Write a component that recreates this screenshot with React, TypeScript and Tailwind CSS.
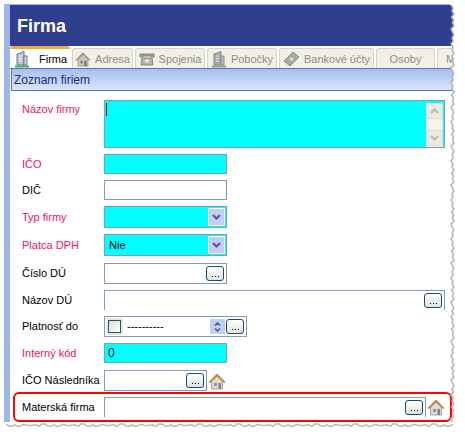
import type { FC, ReactNode } from 'react';

const FONT = "font-['Liberation_Sans',sans-serif]";

// torn screenshot edge, right side and bottom
const jag = (i: number) => [0, 2, 1, 3, 0.5, 2.5, 1.5, 3, 0, 1.5, 2.8, 1, 2.2][i % 13];
const rightEdge = Array.from({ length: 140 }, (_, i) => `${451 + jag(i)},${5 + i * 3}`).join(' ');
const bottomEdge = Array.from({ length: 150 }, (_, i) => `${6 + i * 3},${424 + jag(i * 5) * 0.8}`).join(' ');

const TornEdges: FC = () => (
  <svg className="absolute left-0 top-0 pointer-events-none" width="465" height="436" viewBox="0 0 465 436">
    <polygon points={`450,5 ${rightEdge} 465,425 465,0 450,0`} fill="#fff" />
    <polyline points={rightEdge} fill="none" stroke="#b4b4b4" strokeWidth="1.5" />
    <polyline points={bottomEdge} fill="none" stroke="#b8b8b8" strokeWidth="1.5" />
  </svg>
);

const BuildingIcon: FC<{ muted?: boolean }> = ({ muted }) => (
  <svg width="16" height="18" viewBox="0 0 16 18">
    <path d="M3 4l7-2.500V15H3z" fill={muted ? '#aaa' : '#b9c4d8'} stroke={muted ? '#8a8a8a' : '#6b7890'} />
    <path d="M10 6h3v9h-3z" fill={muted ? '#bbb' : '#d5dbe6'} stroke={muted ? '#8a8a8a' : '#6b7890'} />
    <path d="M5 6h3M5 8.500h3M5 11h3" stroke={muted ? '#e2e2e2' : '#eef3fb'} strokeWidth="1.2" />
    <path d="M1 16.500h14" stroke={muted ? '#999' : '#4aa83e'} strokeWidth="2" />
  </svg>
);

const HouseIcon: FC<{ muted?: boolean; size?: number }> = ({ muted, size = 16 }) => (
  <svg width={size} height={size} viewBox="0 0 18 18">
    <path d="M3.500 9v8h11V9L9 4z" fill={muted ? '#c9c9c2' : '#dcdcd8'} stroke={muted ? '#999' : '#a5a5a0'} />
    <path d="M0.500 10 9 1.500l8.500 8.500-1.500 1L9 4.500 2 11z" fill={muted ? '#9a9a94' : '#c8883c'} />
    <rect x="6" y="11" width="3" height="3" fill={muted ? '#888' : '#8b95a5'} />
    <rect x="10.500" y="11" width="2.500" height="6" fill={muted ? '#777' : '#7c8492'} />
  </svg>
);

const PhoneIcon: FC = () => (
  <svg width="16" height="16" viewBox="0 0 16 16">
    <path d="M1 3h14v3h-3V5H4v1H1z" fill="#999" stroke="#888" />
    <path d="M3 7h10l1 7H2z" fill="#b5b5ae" stroke="#888" />
    <rect x="6" y="8.500" width="4" height="3" fill="#e6e6e0" />
  </svg>
);

const MoneyIcon: FC = () => (
  <svg width="17" height="16" viewBox="0 0 17 16">
    <path d="M1 10 10 1l6 5-9 9z" fill="#a9a9a4" stroke="#8f8f8a" />
    <circle cx="8.500" cy="8" r="2" fill="#d5d5d0" />
  </svg>
);

const Tab: FC<{ label: string; icon?: ReactNode; width: string; active?: boolean }> = ({ label, icon, width, active }) =>
  active ? (
    <div className={`${width} h-[23px] flex items-center gap-[9px] pl-1 bg-white border-t-[3px] border-[#f7a938] rounded-t-[3px] text-black whitespace-nowrap`}>
      {icon}
      <span>{label}</span>
    </div>
  ) : (
    <div className={`${width} h-[21px] shrink-0 mt-[2px] flex items-center justify-center gap-1 bg-[#f2f0e4] border border-b-0 border-[#d6d4c6] rounded-t-[3px] text-[#8d8d8d] whitespace-nowrap`}>
      {icon}
      <span>{label}</span>
    </div>
  );

const DotsButton: FC = () => (
  <div className="w-[18px] h-[15px] shrink-0 flex items-end justify-center pb-[3px] rounded-[3px] border border-[#144a80] bg-gradient-to-b from-white to-[#e2e4dc]">
    <div className="flex gap-[2px]">
      <div className="w-px h-px bg-black" />
      <div className="w-px h-px bg-black" />
      <div className="w-px h-px bg-black" />
    </div>
  </div>
);

const ComboButton: FC = () => (
  <div className="w-[17px] h-[18px] flex items-center justify-center bg-[#c1cff3] border border-white">
    <svg width="9" height="6" viewBox="0 0 9 6">
      <path d="M1 1l3.500 3.500L8 1" fill="none" stroke="#4a5c8c" strokeWidth="2" />
    </svg>
  </div>
);

const Row: FC<{ label: string; required?: boolean; top: string; children: ReactNode; labelTop?: string }> = ({ label, required, top, children, labelTop = 'items-center' }) => (
  <div className={`relative flex ${labelTop} ${top}`}>
    <div className={`w-[94px] shrink-0 pl-3 whitespace-nowrap ${labelTop === 'items-start' ? 'pt-[4px]' : ''} ${required ? 'text-[#f0145a]' : 'text-black'}`}>{label}</div>
    {children}
  </div>
);

const FIELD = 'border border-[#7f9db9]';

const App: FC = () => (
  <div className={`relative w-[465px] h-[436px] bg-white overflow-hidden pl-1 pt-1 text-[11px] leading-none ${FONT}`}>
    <div className="w-[450px] h-[418px] bg-white border-l-[6px] border-t border-[#9db8e8]">
      <div className="h-[41px] bg-[#303e90] flex items-center pl-[7px] text-white text-[18px] font-bold">
        Firma
      </div>

      <div className="h-[23px] flex gap-[2px] overflow-hidden border-b border-[#5578b0] bg-white">
        <Tab label="Firma" icon={<BuildingIcon />} width="w-[60px] shrink-0" active />
        <Tab label="Adresa" icon={<HouseIcon muted />} width="w-[61px]" />
        <Tab label="Spojenia" icon={<PhoneIcon />} width="w-[70px]" />
        <Tab label="Pobočky" icon={<BuildingIcon muted />} width="w-[70px]" />
        <Tab label="Bankové účty" icon={<MoneyIcon />} width="w-[95px]" />
        <Tab label="Osoby" width="w-[59px]" />
        <div className="w-[16px] h-[21px] shrink-0 mt-[2px] pl-2 pt-[5px] bg-[#f2f0e4] border border-b-0 border-r-0 border-[#d6d4c6] rounded-tl-[3px] text-[#8d8d8d]">
          M
        </div>
      </div>

      <div className="h-[22px] ml-px flex items-center pl-[2px] text-[12px] text-[#1f2a80] bg-gradient-to-b from-[#a5bfee] to-[#d9e6fb] border border-t-0 border-r-0 border-[#5578b0]">
        Zoznam firiem
      </div>

      <Row label="Názov firmy" required top="mt-[9px]" labelTop="items-start">
        <div className={`w-[341px] h-[48px] bg-[#00ffff] ${FIELD} flex justify-between pl-px pt-[2px]`}>
          <div className="w-px h-[13px] bg-black" />
          <div className="w-[17px] mr-px flex flex-col justify-between pb-[1px] bg-[#f4f3ec]">
            <div className="h-[16px] flex items-center justify-center bg-[#ebebe2] border border-[#dcdcd0]">
              <svg width="9" height="6" viewBox="0 0 9 6"><path d="M1 5l3.500-3.500L8 5" fill="none" stroke="#b8b8ac" strokeWidth="2" /></svg>
            </div>
            <div className="h-[16px] flex items-center justify-center bg-[#ebebe2] border border-[#dcdcd0]">
              <svg width="9" height="6" viewBox="0 0 9 6"><path d="M1 1l3.500 3.500L8 1" fill="none" stroke="#b8b8ac" strokeWidth="2" /></svg>
            </div>
          </div>
        </div>
      </Row>

      <Row label="IČO" required top="mt-[6px]">
        <div className={`w-[123px] h-[20px] bg-[#00ffff] ${FIELD}`} />
      </Row>
      <Row label="DIČ" top="mt-[6px]">
        <div className={`w-[123px] h-[20px] ${FIELD}`} />
      </Row>
      <Row label="Typ firmy" required top="mt-[6px]">
        <div className={`w-[123px] h-[22px] bg-[#00ffff] ${FIELD} flex items-center justify-end pr-[1px]`}>
          <ComboButton />
        </div>
      </Row>
      <Row label="Platca DPH" required top="mt-[6px]">
        <div className={`w-[123px] h-[22px] bg-[#00ffff] ${FIELD} flex items-center justify-between pl-1 pr-[1px] text-black`}>
          <span>Nie</span>
          <ComboButton />
        </div>
      </Row>
      <Row label="Číslo DÚ" top="mt-[7px]">
        <div className={`w-[123px] h-[21px] ${FIELD} flex items-center justify-end pr-[2px]`}>
          <DotsButton />
        </div>
      </Row>
      <Row label="Názov DÚ" top="mt-[6px]">
        <div className={`w-[341px] h-[20px] ${FIELD} border-b-0 flex items-center justify-end pr-[2px]`}>
          <DotsButton />
        </div>
      </Row>
      <Row label="Platnosť do" top="mt-[6px]">
        <div className={`w-[143px] h-[21px] ${FIELD} flex items-center pl-[1px] pr-[2px]`}>
          <div className="w-[17px] h-[17px] flex items-center justify-center bg-[#ece9d8]">
            <div className="w-[13px] h-[13px] border border-[#1c5180] bg-gradient-to-br from-[#dcdcd7] to-white" />
          </div>
          <span className="ml-1 flex-1">----------</span>
          <div className="w-[15px] h-[15px] mr-px flex flex-col items-center justify-center gap-[2px] bg-[#c1cff3]">
            <svg width="7" height="4" viewBox="0 0 7 4"><path d="M1 3.500 3.500 1 6 3.500" fill="none" stroke="#4a5c8c" strokeWidth="1.500" /></svg>
            <svg width="7" height="4" viewBox="0 0 7 4"><path d="M1 .5 3.500 3 6 .5" fill="none" stroke="#4a5c8c" strokeWidth="1.500" /></svg>
          </div>
          <DotsButton />
        </div>
      </Row>
      <Row label="Interný kód" required top="mt-[6px]">
        <div className={`w-[123px] h-[20px] bg-[#00ffff] ${FIELD} flex items-center pl-[3px] text-black text-[12px]`}>0</div>
      </Row>
      <Row label="IČO Následníka" top="mt-[7px]">
        <div className={`w-[103px] h-[21px] ${FIELD} flex items-center justify-end pr-[2px]`}>
          <DotsButton />
        </div>
        <div className="ml-[1px]"><HouseIcon size={18} /></div>
      </Row>
      <Row label="Materská firma" top="mt-[6px]">
        <div className={`w-[322px] h-[20px] ${FIELD} border-b-0 flex items-center justify-end pr-[2px]`}>
          <DotsButton />
        </div>
        <div className="ml-[1px]"><HouseIcon size={18} /></div>
        <div className="absolute left-[3px] top-[-5px] w-[439px] h-[30px] border-2 border-[#ff0000] rounded-[6px] pointer-events-none" />
      </Row>
    </div>
    <TornEdges />
  </div>
);

export default App;
